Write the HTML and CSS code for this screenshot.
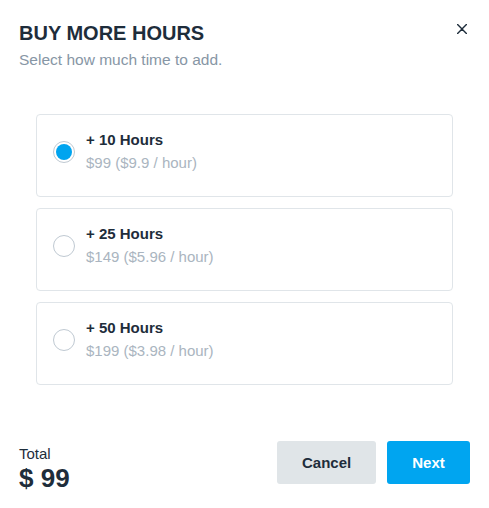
FILE: index.html
```html
<!DOCTYPE html>
<html lang="en">
<head>
<meta charset="utf-8">
<title>Buy more hours</title>
<link rel="stylesheet" href="styles.css">
</head>
<body>
<div class="modal">
  <div class="header">
    <div class="heading">
      <h1 class="title">BUY MORE HOURS</h1>
      <p class="subtitle">Select how much time to add.</p>
    </div>
    <button class="close" aria-label="Close">
      <svg width="10" height="10" viewBox="0 0 10 10"><path d="M0.6 0.6L9.4 9.4M9.4 0.6L0.6 9.4" stroke="#1e2d3b" stroke-width="1.4" stroke-linecap="round" fill="none"/></svg>
    </button>
  </div>
  <div class="options">
    <label class="option">
      <span class="radio checked"></span>
      <span class="info">
        <span class="name">+ 10 Hours</span>
        <span class="price">$99 ($9.9 / hour)</span>
      </span>
    </label>
    <label class="option">
      <span class="radio"></span>
      <span class="info">
        <span class="name">+ 25 Hours</span>
        <span class="price">$149 ($5.96 / hour)</span>
      </span>
    </label>
    <label class="option">
      <span class="radio"></span>
      <span class="info">
        <span class="name">+ 50 Hours</span>
        <span class="price">$199 ($3.98 / hour)</span>
      </span>
    </label>
  </div>
  <div class="footer">
    <div class="total">
      <div class="total-label">Total</div>
      <div class="total-value">$ 99</div>
    </div>
    <div class="actions">
      <button class="btn btn-cancel">Cancel</button>
      <button class="btn btn-next">Next</button>
    </div>
  </div>
</div>
</body>
</html>
```
FILE: styles.css
```css
* { box-sizing: border-box; }
html, body { margin: 0; padding: 0; background: #ffffff; }
body { font-family: "Liberation Sans", Arial, Helvetica, sans-serif; color: #1e2d3b; }

.modal { width: 489px; padding: 21px 19px 0 19px; }

.header { display: flex; justify-content: space-between; align-items: flex-start; }
.title { margin: 0; font-size: 20px; line-height: 24px; font-weight: 700; color: #1e2d3b; }
.subtitle { margin: 5px 0 0; font-size: 15.5px; line-height: 20px; color: #8796a5; }
.close { border: 0; background: none; padding: 0; margin: 3px 3px 0 0; width: 10px; height: 10px; display: flex; cursor: pointer; }

.options { display: flex; flex-direction: column; gap: 11px; margin: 44px 17px 0; }
.option { display: flex; align-items: center; height: 83px; border: 1px solid #e0e5e9; border-radius: 4px; padding: 14px 16px 22px; cursor: pointer; }
.radio { width: 22px; height: 22px; flex: none; border-radius: 50%; border: 1px solid #bfc9d2; background: #fff; display: flex; align-items: center; justify-content: center; margin-right: 11px; }
.radio.checked::after { content: ""; width: 16px; height: 16px; border-radius: 50%; background: #00a4ef; }
.info { display: flex; flex-direction: column; }
.name { font-size: 15px; line-height: 20px; font-weight: 700; color: #1e2d3b; }
.price { font-size: 15px; line-height: 20px; margin-top: 3px; color: #aab5c0; }

.footer { display: flex; justify-content: space-between; align-items: flex-start; margin-top: 56px; }
.total { margin-top: 4px; }
.total-label { font-size: 15px; line-height: 18px; color: #1e2d3b; }
.total-value { font-size: 26px; line-height: 30px; font-weight: 700; color: #1e2d3b; }
.actions { display: flex; gap: 11px; }
.btn { height: 43px; border: 0; border-radius: 3px; padding: 0 25px; font-family: inherit; font-size: 15px; font-weight: 700; cursor: pointer; }
.btn-cancel { background: #e0e5e8; color: #1e2d3b; width: 99px; }
.btn-next { background: #00a5f0; color: #ffffff; width: 83px; }
```
